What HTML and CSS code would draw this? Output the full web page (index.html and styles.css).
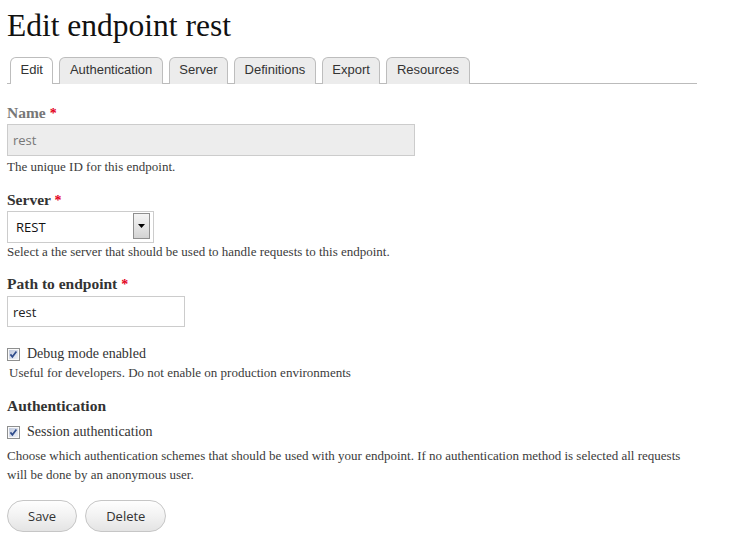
FILE: index.html
```html
<!DOCTYPE html>
<html lang="en">
<head>
<meta charset="utf-8">
<title>Edit endpoint rest</title>
<link rel="stylesheet" href="styles.css">
</head>
<body>
<div class="page">
  <h1 class="title">Edit endpoint rest</h1>
  <ul class="tabs">
    <li class="tab active"><a href="#">Edit</a></li>
    <li class="tab"><a href="#">Authentication</a></li>
    <li class="tab"><a href="#">Server</a></li>
    <li class="tab"><a href="#">Definitions</a></li>
    <li class="tab"><a href="#">Export</a></li>
    <li class="tab"><a href="#">Resources</a></li>
  </ul>

  <form class="form">
    <div class="form-item item-name">
      <label class="label disabled">Name <span class="req">*</span></label>
      <input class="text-input input-name" type="text" value="rest" disabled>
      <div class="description">The unique ID for this endpoint.</div>
    </div>

    <div class="form-item item-server">
      <label class="label">Server <span class="req">*</span></label>
      <div class="select">
        <span class="select-value">REST</span>
        <span class="select-button">
          <svg width="7" height="4" viewBox="0 0 7 4"><path d="M0 0H7L3.5 4Z" fill="#000"/></svg>
        </span>
      </div>
      <div class="description">Select a the server that should be used to handle requests to this endpoint.</div>
    </div>

    <div class="form-item item-path">
      <label class="label">Path to endpoint <span class="req">*</span></label>
      <input class="text-input input-path" type="text" value="rest">
    </div>

    <div class="form-item item-debug">
      <div class="check-row">
        <svg class="checkbox" width="13" height="13" viewBox="0 0 13 13">
          <defs>
            <linearGradient id="cbg1" x1="0" y1="0" x2="1" y2="1">
              <stop offset="0" stop-color="#bfc8dc"/>
              <stop offset="1" stop-color="#eef1f7"/>
            </linearGradient>
          </defs>
          <rect x="0.5" y="0.5" width="12" height="12" fill="#fafafa" stroke="#8e8f8f"/>
          <rect x="2" y="2" width="9" height="9" fill="url(#cbg1)"/>
          <path d="M3.4 6.4 L5.4 8.8 L9.4 3.6" fill="none" stroke="#2f4c8c" stroke-width="1.7"/>
        </svg>
        <span class="check-label">Debug mode enabled</span>
      </div>
      <div class="description indent">Useful for developers. Do not enable on production environments</div>
    </div>

    <div class="form-item item-auth">
      <label class="label">Authentication</label>
      <div class="check-row auth-row">
        <svg class="checkbox" width="13" height="13" viewBox="0 0 13 13">
          <defs>
            <linearGradient id="cbg2" x1="0" y1="0" x2="1" y2="1">
              <stop offset="0" stop-color="#bfc8dc"/>
              <stop offset="1" stop-color="#eef1f7"/>
            </linearGradient>
          </defs>
          <rect x="0.5" y="0.5" width="12" height="12" fill="#fafafa" stroke="#8e8f8f"/>
          <rect x="2" y="2" width="9" height="9" fill="url(#cbg2)"/>
          <path d="M3.4 6.4 L5.4 8.8 L9.4 3.6" fill="none" stroke="#2f4c8c" stroke-width="1.7"/>
        </svg>
        <span class="check-label">Session authentication</span>
      </div>
      <div class="description long">Choose which authentication schemes that should be used with your endpoint. If no authentication method is selected all requests will be done by an anonymous user.</div>
    </div>

    <div class="actions">
      <button type="button" class="button">Save</button>
      <button type="button" class="button">Delete</button>
    </div>
  </form>
</div>
</body>
</html>
```

FILE: styles.css
```css
html, body {
  margin: 0;
  padding: 0;
  background: #ffffff;
}

body {
  font-family: "Liberation Serif", "Times New Roman", serif;
  color: #3b3b3b;
}

.page {
  width: 690px;
  padding: 8px 0 0 7px;
}

.title {
  margin: 0 0 13px 0;
  font-size: 31.5px;
  line-height: 36px;
  font-weight: normal;
  color: #111;
}

/* Tabs */
.tabs {
  display: flex;
  gap: 6px;
  margin: 0;
  padding: 0 0 0 3px;
  list-style: none;
  border-bottom: 1px solid #bbbbbb;
}

.tab {
  border: 1px solid #bdbdbd;
  border-bottom: none;
  border-radius: 6px 6px 0 0;
  background: #ececec;
  margin-bottom: -1px;
}

.tab a {
  display: block;
  padding: 0 9.5px 2px;
  line-height: 24px;
  font-family: "Liberation Sans", Arial, sans-serif;
  font-size: 13px;
  color: #333;
  text-decoration: none;
}

.tab.active {
  background: #ffffff;
}

/* Form */
.form-item {
  display: flex;
  flex-direction: column;
  align-items: flex-start;
}

.label {
  display: block;
  height: 17px;
  padding-top: 1px;
  font-size: 15.5px;
  line-height: 18px;
  font-weight: bold;
  color: #333;
}

.label.disabled {
  color: #777;
}

.req {
  color: #e3001b;
  font-size: 14px;
  line-height: 1;
}

.description {
  font-size: 13px;
  line-height: 18px;
  color: #3b3b3b;
}

.description.indent {
  padding-left: 2px;
  margin-top: 2px;
}

.description.long {
  line-height: 19px;
  margin-top: 6px;
}

.item-name {
  margin-top: 19px;
}

.item-server {
  margin-top: 14px;
}

.item-path {
  margin-top: 13px;
}

.item-debug {
  margin-top: 17px;
}

.item-auth {
  margin-top: 14px;
}

.text-input {
  box-sizing: border-box;
  margin: 0;
  border: 1px solid #cccccc;
  background: #fff;
  font-family: "Open Sans", "DejaVu Sans", sans-serif;
  font-size: 13px;
  color: #222;
  padding: 0 5px;
  outline: none;
}

.input-name {
  width: 408px;
  height: 32px;
  margin-top: 3px;
  margin-bottom: 2px;
  background: #ededed;
  color: #777;
  -webkit-text-fill-color: #777;
  opacity: 1;
}

.input-path {
  width: 178px;
  height: 31px;
  margin-top: 4px;
}

/* Select */
.select {
  box-sizing: border-box;
  display: flex;
  align-items: flex-start;
  width: 147px;
  height: 32px;
  margin-top: 3px;
  border: 1px solid #cccccc;
  background: #fff;
  font-family: "Open Sans", "DejaVu Sans", sans-serif;
  font-size: 13px;
  color: #111;
}

.select-value {
  padding-left: 8px;
  line-height: 30px;
}

.select-button {
  box-sizing: border-box;
  display: flex;
  align-items: center;
  justify-content: center;
  width: 17px;
  height: 26px;
  margin: 1px 3px 0 auto;
  border: 1px solid #8f8f8f;
  background: linear-gradient(#f4f4f4, #e2e2e2 60%, #d3d3d3);
}

/* Checkboxes */
.check-row {
  display: flex;
  align-items: flex-start;
  height: 18px;
}

.auth-row {
  margin-top: 8px;
}

.checkbox {
  flex: none;
  margin-top: 4px;
  margin-right: 7px;
}

.check-label {
  padding-top: 1px;
  font-size: 14px;
  line-height: 18px;
  color: #333;
}

/* Buttons */
.actions {
  display: flex;
  gap: 8px;
  margin-top: 16px;
}

.button {
  box-sizing: border-box;
  height: 32px;
  padding: 0 20px;
  border: 1px solid #c6c6c6;
  border-radius: 16px;
  background: linear-gradient(#fefefe, #f2f2f2 50%, #e4e4e4);
  font-family: "Open Sans", "DejaVu Sans", sans-serif;
  font-size: 13px;
  color: #333;
  cursor: pointer;
}
```
